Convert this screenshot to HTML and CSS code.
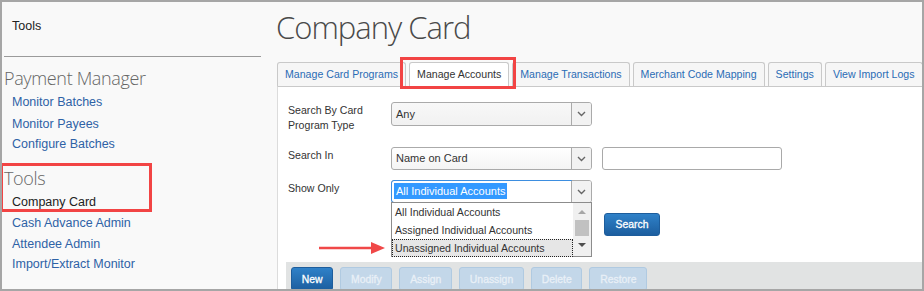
FILE: index.html
```html
<!DOCTYPE html>
<html lang="en">
<head>
    <meta charset="UTF-8">
    <meta name="viewport" content="width=device-width, initial-scale=1.0">
    <title>Company Card</title>
    <link rel="stylesheet" href="styles.css">
</head>
<body>
    <div class="frame">
        <aside class="sidebar">
            <div class="sidebar-top">Tools</div>

            <h2 class="nav-heading">Payment Manager</h2>
            <ul class="nav-list">
                <li><a href="#">Monitor Batches</a></li>
                <li><a href="#">Monitor Payees</a></li>
                <li><a href="#">Configure Batches</a></li>
            </ul>

            <h2 class="nav-heading nav-heading-tools">Tools</h2>
            <ul class="nav-list">
                <li><a href="#" class="current">Company Card</a></li>
                <li><a href="#">Cash Advance Admin</a></li>
                <li><a href="#">Attendee Admin</a></li>
                <li><a href="#">Import/Extract Monitor</a></li>
            </ul>
        </aside>

        <main class="main">
            <h1 class="page-title">Company Card</h1>

            <ul class="tabs">
                <li><a href="#">Manage Card Programs</a></li>
                <li><a href="#" class="active">Manage Accounts</a></li>
                <li><a href="#">Manage Transactions</a></li>
                <li><a href="#">Merchant Code Mapping</a></li>
                <li><a href="#">Settings</a></li>
                <li><a href="#">View Import Logs</a></li>
            </ul>

            <section class="panel">
                <form class="search-form">
                    <div class="form-row row-program">
                        <label class="form-label">Search By Card<br>Program Type</label>
                        <div class="select select-tall">
                            <span class="select-value">Any</span>
                            <span class="select-arrow">
                                <svg width="9" height="6" viewBox="0 0 9 6"><path d="M1 1 L4.5 4.5 L8 1" /></svg>
                            </span>
                        </div>
                    </div>

                    <div class="form-row row-search-in">
                        <label class="form-label">Search In</label>
                        <div class="select">
                            <span class="select-value">Name on Card</span>
                            <span class="select-arrow">
                                <svg width="9" height="6" viewBox="0 0 9 6"><path d="M1 1 L4.5 4.5 L8 1" /></svg>
                            </span>
                        </div>
                        <input type="text" class="text-input">
                    </div>

                    <div class="form-row row-show-only">
                        <label class="form-label">Show Only</label>
                        <div class="select is-open">
                            <span class="select-value"><span class="selected-text">All Individual Accounts</span></span>
                            <span class="select-arrow">
                                <svg width="9" height="6" viewBox="0 0 9 6"><path d="M1 1 L4.5 4.5 L8 1" /></svg>
                            </span>
                            <div class="listbox">
                                <ul class="listbox-items">
                                    <li>All Individual Accounts</li>
                                    <li>Assigned Individual Accounts</li>
                                    <li class="hover">Unassigned Individual Accounts</li>
                                </ul>
                                <div class="listbox-scroll">
                                    <span class="scroll-up"></span>
                                    <span class="scroll-thumb"></span>
                                    <span class="scroll-down"></span>
                                </div>
                            </div>
                        </div>
                    </div>

                    <div class="form-row row-actions">
                        <span class="form-label"></span>
                        <span class="form-spacer"></span>
                        <button type="button" class="btn btn-primary btn-search">Search</button>
                    </div>
                </form>

                <div class="toolbar">
                    <button type="button" class="btn btn-primary">New</button>
                    <button type="button" class="btn btn-disabled">Modify</button>
                    <button type="button" class="btn btn-disabled">Assign</button>
                    <button type="button" class="btn btn-disabled">Unassign</button>
                    <button type="button" class="btn btn-disabled">Delete</button>
                    <button type="button" class="btn btn-disabled">Restore</button>
                </div>
            </section>
        </main>

        <!-- annotation marks drawn over the screenshot -->
        <div class="callout callout-nav"></div>
        <div class="callout callout-tab"></div>
        <svg class="callout-arrow" width="70" height="16" viewBox="0 0 70 16">
            <line x1="2" y1="8" x2="58" y2="8" />
            <polygon points="54,2 68,8 54,14" />
        </svg>
    </div>
</body>
</html>
```

FILE: styles.css
```css
body {
    margin: 0;
    font-family: "Liberation Sans", Arial, sans-serif;
    color: #333;
}

.frame {
    position: relative;
    display: flex;
    width: 924px;
    height: 291px;
    box-sizing: border-box;
    border: 2px solid #a6a6a6;
    background-color: #f9f9f9;
    overflow: hidden;
}

/* sidebar */

.sidebar {
    width: 275px;
    flex-shrink: 0;
    padding-top: 16px;
    box-sizing: border-box;
}

.sidebar-top {
    margin: 0 16px 0 2px;
    padding: 0 0 22px 8px;
    border-bottom: 1px solid #9b9b9b;
    font-size: 12.5px;
    line-height: 16px;
    color: #222;
}

.nav-heading {
    margin: 10px 0 0 2px;
    font-family: "Open Sans", sans-serif;
    font-weight: 300;
    font-size: 18px;
    line-height: 22px;
    letter-spacing: -0.35px;
    color: #666;
}

.nav-heading-tools {
    margin-top: 12px;
}

.nav-list {
    list-style: none;
    margin: 3px 0 0;
    padding-left: 10px;
}

.nav-list li {
    font-size: 12.5px;
    line-height: 20.5px;
}

.nav-list li:first-child {
    line-height: 21.5px;
}

.nav-list a {
    color: #2e62a6;
    text-decoration: none;
}

.nav-list a.current {
    color: #222;
}

/* main */

.main {
    flex: 1;
    min-width: 0;
    display: flex;
    flex-direction: column;
    padding-top: 5px;
}

.page-title {
    margin: 0 0 15px -1px;
    font-family: "Open Sans", sans-serif;
    font-weight: 300;
    font-size: 31px;
    line-height: 40px;
    letter-spacing: -1px;
    color: #4a4a4a;
}

.tabs {
    display: flex;
    flex-wrap: nowrap;
    list-style: none;
    margin: 0;
    padding: 0;
}

.tabs li {
    margin-right: 3px;
}

.tabs a {
    display: block;
    height: 24px;
    box-sizing: border-box;
    padding: 0 7px;
    border: 1px solid #c9c9c9;
    border-bottom: none;
    border-radius: 3px 3px 0 0;
    background-color: #f6f6f6;
    font-size: 10.6px;
    line-height: 23px;
    color: #2a6cb5;
    text-decoration: none;
    white-space: nowrap;
}

.tabs a.active {
    position: relative;
    height: 25px;
    margin-bottom: -1px;
    background-color: #fff;
    color: #333;
}

.panel {
    flex: 1;
    background-color: #fff;
    border-top: 1px solid #c9c9c9;
    border-left: 1px solid #dcdcdc;
}

/* search form */

.search-form {
    padding: 15px 0 0 10px;
}

.form-row {
    display: flex;
    align-items: flex-start;
}

.row-program {
    margin-bottom: 14px;
}

.row-search-in,
.row-show-only {
    margin-bottom: 10px;
}

.form-label {
    width: 103px;
    flex-shrink: 0;
    padding-top: 1px;
    font-size: 10.6px;
    line-height: 15px;
    color: #333;
}

.form-spacer {
    width: 200px;
}

.select {
    position: relative;
    display: flex;
    width: 201px;
    height: 23px;
    box-sizing: border-box;
    border: 1px solid #aaa;
    border-radius: 3px;
    background: linear-gradient(#fff, #f4f4f4);
}

.select-tall {
    height: 24px;
    background: linear-gradient(#f8f8f8, #f1f1f1);
}

.select-value {
    flex: 1;
    padding-left: 4px;
    font-size: 11px;
    line-height: 21px;
    color: #333;
    border-radius: 2px 0 0 2px;
}

.select-tall .select-value {
    line-height: 22px;
}

.select-arrow {
    width: 19px;
    display: flex;
    align-items: center;
    justify-content: center;
    border-left: 1px solid #aaa;
    background-color: #f2f2f2;
    border-radius: 0 2px 2px 0;
}

.select-arrow path {
    fill: none;
    stroke: #666;
    stroke-width: 1.4;
}

.select.is-open .select-value {
    padding-left: 2px;
    outline: 1px solid #3d8ee0;
    background-color: #fff;
}

.selected-text {
    padding: 2px 2px;
    background-color: #3399ff;
    color: #fff;
}

.listbox {
    position: absolute;
    top: 100%;
    left: -1px;
    display: flex;
    width: 201px;
    height: 55px;
    box-sizing: border-box;
    border: 1px solid #8c8c8c;
    background-color: #fff;
}

.listbox-items {
    flex: 1;
    list-style: none;
    margin: 0;
    padding: 0;
}

.listbox-items li {
    padding-left: 3px;
    font-size: 10.6px;
    line-height: 18px;
    color: #333;
    white-space: nowrap;
}

.listbox-items li.hover {
    background-color: #e6e6e6;
    outline: 1px dotted #222;
    outline-offset: -1px;
}

.listbox-scroll {
    width: 18px;
    display: flex;
    flex-direction: column;
    align-items: center;
    background-color: #f0f0f0;
}

.scroll-up,
.scroll-down {
    width: 0;
    height: 0;
    border-left: 4px solid transparent;
    border-right: 4px solid transparent;
}

.scroll-up {
    margin-top: 7px;
    border-bottom: 4px solid #a6a6a6;
}

.scroll-thumb {
    width: 14px;
    height: 16px;
    margin-top: 6px;
    background-color: #c1c1c1;
}

.scroll-down {
    margin-top: 7px;
    border-top: 4px solid #4f4f4f;
}

.text-input {
    width: 180px;
    height: 23px;
    box-sizing: border-box;
    margin: 0 0 0 10px;
    border: 1px solid #a9a9a9;
    border-radius: 3px;
    background-color: #fff;
}

/* buttons */

.btn {
    height: 24px;
    box-sizing: border-box;
    padding: 0 9.75px;
    border-radius: 3px;
    font-family: "Liberation Sans", Arial, sans-serif;
    font-size: 10.4px;
    -webkit-text-stroke: 0.3px currentColor;
}

.btn-primary {
    border: 1px solid #1d5d9c;
    background: linear-gradient(#2f81c8, #1c5e9f);
    color: #fff;
}

.btn-disabled {
    border: 1px solid #b0cae1;
    background-color: #c3d7e9;
    color: #e9f0f7;
}

.btn-search {
    width: 56px;
    height: 23px;
    margin-left: 13px;
    padding: 0;
}

.toolbar {
    display: flex;
    gap: 7px;
    margin: 26px 0 0 8px;
    padding: 5px 0 0 5px;
    height: 29px;
    box-sizing: border-box;
    background-color: #e1e3e3;
}

/* red annotation marks */

.callout {
    position: absolute;
    box-sizing: border-box;
    border: 3px solid #f24444;
}

.callout-nav {
    left: -2px;
    top: 161px;
    width: 152px;
    height: 49px;
}

.callout-tab {
    left: 398px;
    top: 55px;
    width: 116px;
    height: 32px;
}

.callout-arrow {
    position: absolute;
    left: 315px;
    top: 238px;
}

.callout-arrow line {
    stroke: #f04848;
    stroke-width: 2.5;
}

.callout-arrow polygon {
    fill: #f04848;
}
```
